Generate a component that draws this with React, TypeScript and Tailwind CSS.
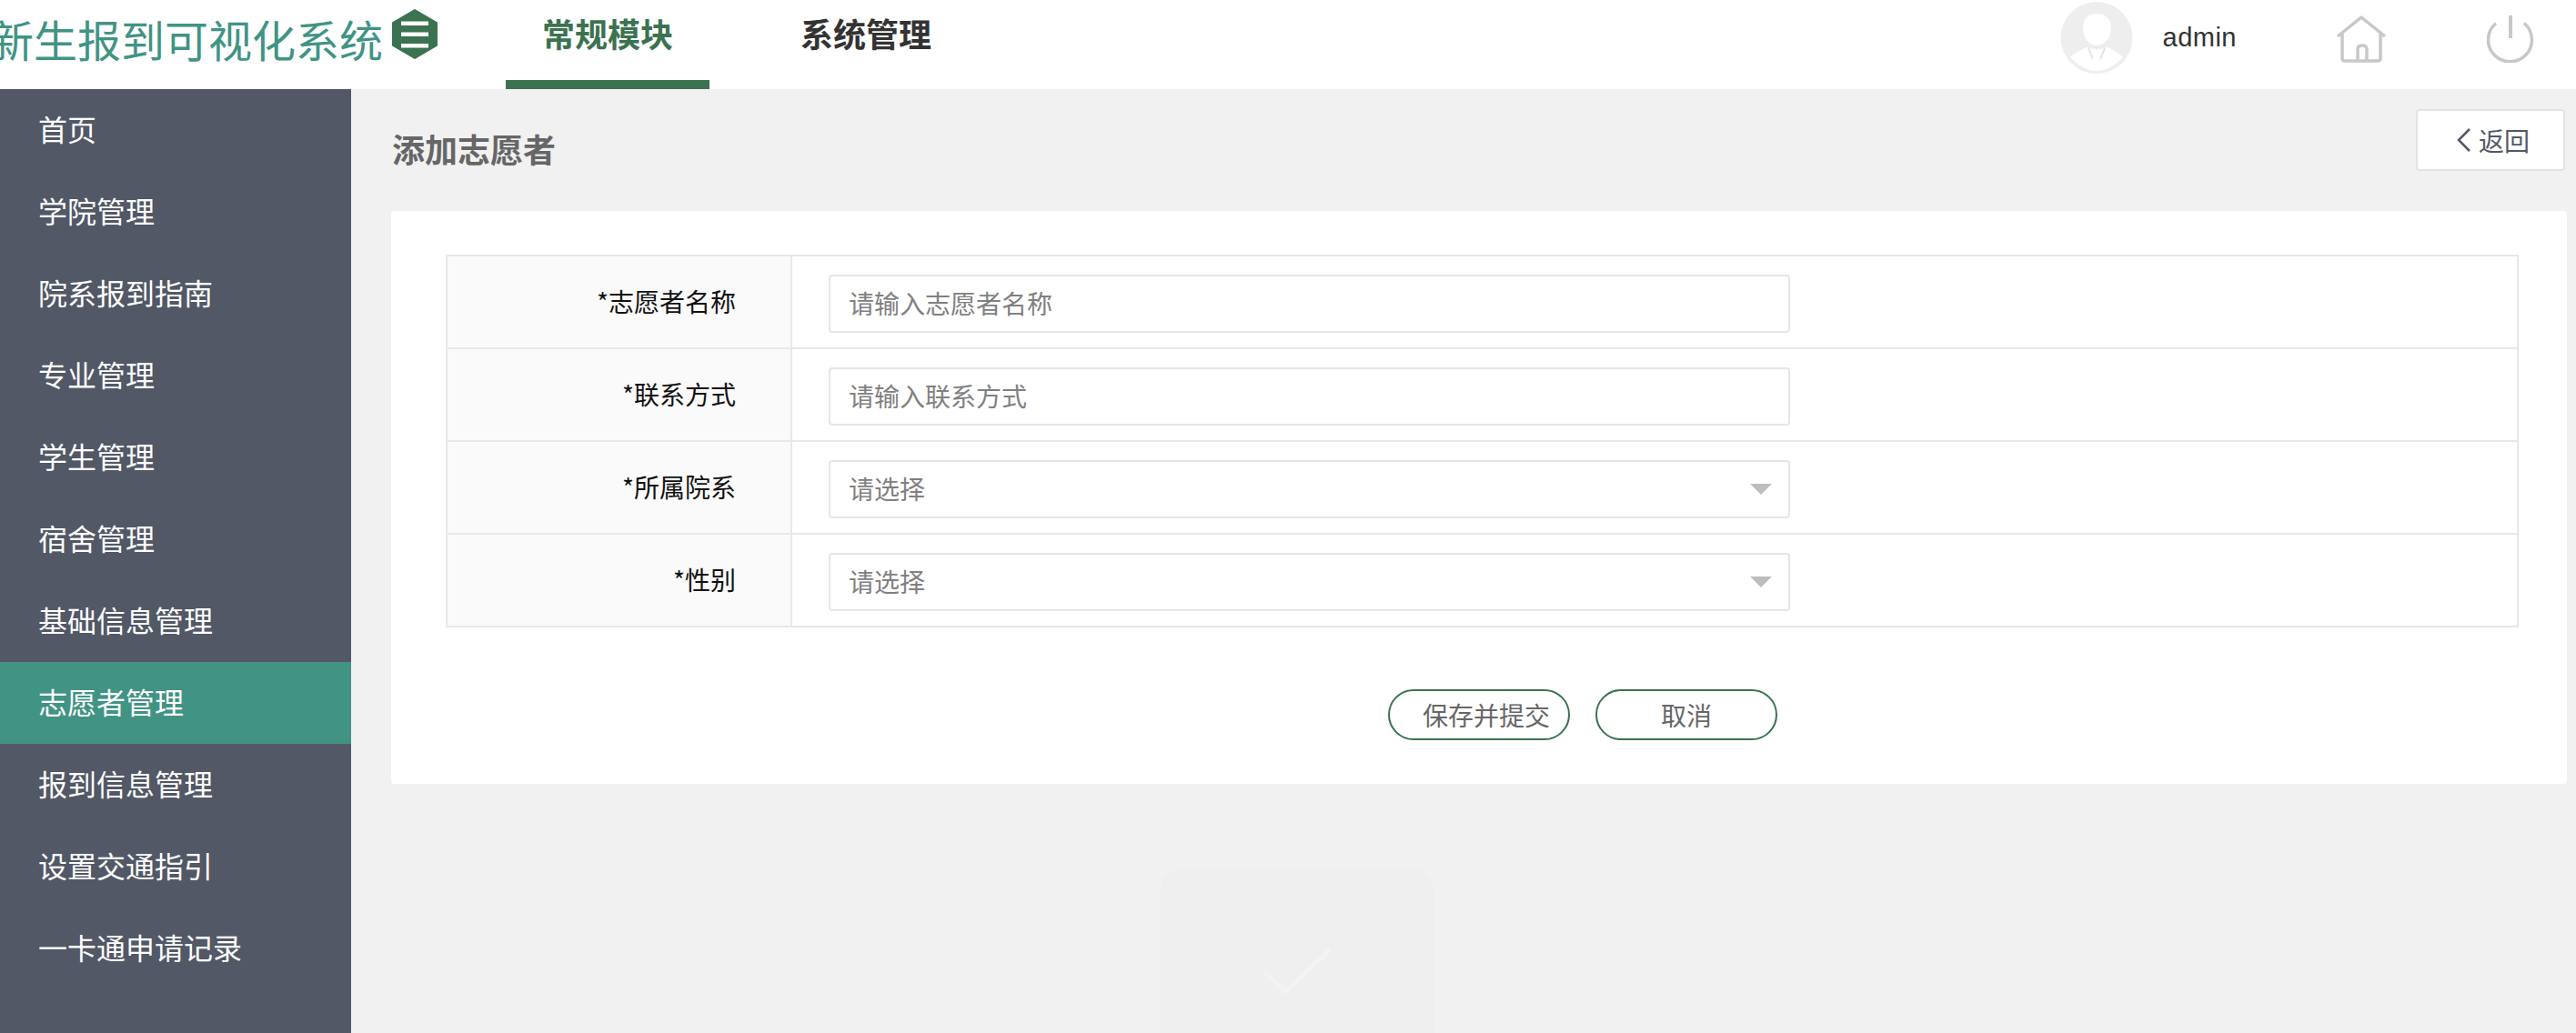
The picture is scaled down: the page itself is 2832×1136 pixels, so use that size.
const menuItems = [
  "首页",
  "学院管理",
  "院系报到指南",
  "专业管理",
  "学生管理",
  "宿舍管理",
  "基础信息管理",
  "志愿者管理",
  "报到信息管理",
  "设置交通指引",
  "一卡通申请记录",
];

const fields = [
  { label: "*志愿者名称", placeholder: "请输入志愿者名称", select: false },
  { label: "*联系方式", placeholder: "请输入联系方式", select: false },
  { label: "*所属院系", placeholder: "请选择", select: true },
  { label: "*性别", placeholder: "请选择", select: true },
];

const fontStack = { fontFamily: '"Noto Sans CJK SC", sans-serif' };

function Logo() {
  return (
    <svg width="50" height="55" viewBox="0 0 50 55" className="ml-[10px] mt-[10px] shrink-0">
      <path d="M25 1 L49 15 V40 L25 54 L1 40 V15 Z" fill="#3b7250" stroke="#3b7250" strokeWidth="2" strokeLinejoin="round" />
      <rect x="10" y="13.5" width="30" height="4.5" fill="#fff" />
      <rect x="10" y="25.5" width="30" height="4.5" fill="#fff" />
      <rect x="10" y="38" width="30" height="4.5" fill="#fff" />
    </svg>
  );
}

function Avatar() {
  return (
    <svg width="80" height="80" viewBox="0 0 80 80">
      <circle cx="40" cy="39.5" r="39.5" fill="#eeeeee" />
      <path d="M40 13 C49 13 56 19 56 28 C56 39 49 48 40 48 C31 48 25 39 25 28 C25 19 31 13 40 13 Z" fill="#fff" />
      <path d="M11 61 C16 56 22 53 29 50 L40 53 L52 50 C58 53 64 56 69 61 C58 72 49 76 40 76 C31 76 22 72 11 61 Z" fill="#fff" />
      <path d="M31 51 L36 63 M49 51 L44 63" stroke="#e4e4e4" strokeWidth="2" fill="none" />
      <path d="M37 51 H43 L42 55 L44 62 L40 66 L36 62 L38 55 Z" fill="#fff" />
      <path d="M38 50 H42 L40 53 Z" fill="#e4e4e4" />
    </svg>
  );
}

function HomeIcon() {
  return (
    <svg width="56" height="52" viewBox="0 0 56 52" fill="none" stroke="#c8c8c8" strokeWidth="3.5">
      <path d="M2 23 L28 2 L54 23" strokeLinejoin="round" />
      <path d="M7 20 V47 Q7 50 10 50 H46 Q49 50 49 47 V20" />
      <path d="M24 50 V37 Q24 33 29 33 Q34 33 34 37 V50" />
    </svg>
  );
}

function PowerIcon() {
  return (
    <svg width="52" height="52" viewBox="0 0 52 52" fill="none" stroke="#c8c8c8" strokeWidth="3.5">
      <path d="M10 8.5 A24 24 0 1 0 41 8.5" />
      <path d="M26 0 V25" strokeWidth="4" />
    </svg>
  );
}

export default function App() {
  return (
    <div className="h-[1136px] w-[2832px] overflow-hidden flex flex-col bg-[#f1f1f1]" style={fontStack}>
      {/* Top bar */}
      <div className="h-[98px] shrink-0 bg-white flex overflow-hidden">
        <div className="ml-[-11px] mt-[14px] text-[48px] leading-[56px] text-[#419384] whitespace-nowrap">新生报到可视化系统</div>
        <Logo />
        <div className="ml-[75px] w-[224px] h-[98px] border-b-[10px] border-[#3b7250] text-center text-[36px] leading-[52px] pt-[10px] font-bold text-[#3b7250]">
          常规模块
        </div>
        <div className="ml-[100px] h-[98px] text-[36px] leading-[52px] pt-[10px] font-bold text-[#333]">系统管理</div>
        <div className="ml-auto flex">
          <div className="ml-[1px] mt-[2px] h-[80px]"><Avatar /></div>
          <div className="ml-[33px] mt-[20px] text-[29px] leading-[42px] tracking-[0.5px] text-[#333]" style={{ fontFamily: '"Liberation Sans", sans-serif' }}>admin</div>
          <div className="ml-[109px] mt-[17px]"><HomeIcon /></div>
          <div className="ml-[110px] mr-[46px] mt-[17px]"><PowerIcon /></div>
        </div>
      </div>

      <div className="flex-1 flex min-h-0">
        {/* Sidebar */}
        <div className="w-[386px] shrink-0 bg-[#525866]">
          {menuItems.map((item) => (
            <div
              key={item}
              className={`h-[90px] pl-[42px] pb-[4px] flex items-center text-[32px] text-white ${item === "志愿者管理" ? "bg-[#419384]" : ""}`}
            >
              {item}
            </div>
          ))}
        </div>

        {/* Content */}
        <div className="relative flex-1 pl-[44px] pr-[10px]">
          <div className="h-[134px] flex justify-between items-start">
            <div className="mt-[38px] ml-[1px] text-[36px] leading-[54px] font-bold text-[#666]">添加志愿者</div>
            <button className="mt-[22px] mr-[2px] w-[164px] h-[68px] pl-[6px] bg-white border-2 border-[#e3e3e3] rounded flex items-center justify-center gap-[8px] text-[28px] text-[#525866]">
              <svg width="16" height="26" viewBox="0 0 16 26" fill="none" stroke="#525866" strokeWidth="2.5">
                <path d="M14 1 L2 13 L14 25" />
              </svg>
              <span>返回</span>
            </button>
          </div>

          <div className="h-[630px] bg-white rounded pt-[48px] pl-[60px] pr-[53px]">
            <div className="border-2 border-b-0 border-[#e8e8e8]">
              {fields.map((field) => (
                <div key={field.label} className="flex h-[102px] border-b-2 border-[#e8e8e8]">
                  <div className="w-[379px] shrink-0 bg-[#fafafa] border-r-2 border-[#e8e8e8] flex items-center justify-end pr-[60px] pb-[3px] text-[28px] text-[#111]">
                    {field.label}
                  </div>
                  <div className="pl-[40px] pt-[20px]">
                    <div className="relative w-[1057px] h-[64px] border-2 border-[#e6e6e6] rounded pl-[20px] pb-[3px] flex items-center text-[28px] text-[#808080]">
                      {field.placeholder}
                      {field.select && (
                        <div className="absolute right-[18px] top-[24px] w-0 h-0 border-x-[12px] border-x-transparent border-t-[12px] border-t-[#bdbdbd]" />
                      )}
                    </div>
                  </div>
                </div>
              ))}
            </div>

            <div className="mt-[68px] ml-[1036px] flex gap-[28px]">
              <button className="w-[200px] h-[56px] rounded-full border-2 border-[#3b7250] bg-white text-left pl-[36px] text-[28px] text-[#666]">保存并提交</button>
              <button className="w-[200px] h-[56px] rounded-full border-2 border-[#3b7250] bg-white text-center text-[28px] text-[#666]">取消</button>
            </div>
          </div>

          {/* faded watermark under the card */}
          <div className="absolute left-[890px] top-[857px] w-[300px] h-[260px] rounded-[24px] bg-[#efefef]">
            <svg width="76" height="52" viewBox="0 0 76 52" fill="none" stroke="#f3f3f3" strokeWidth="5" className="absolute left-[112px] top-[87px]">
              <path d="M2 27 L25 49 L74 2" />
            </svg>
          </div>
        </div>
      </div>
    </div>
  );
}
